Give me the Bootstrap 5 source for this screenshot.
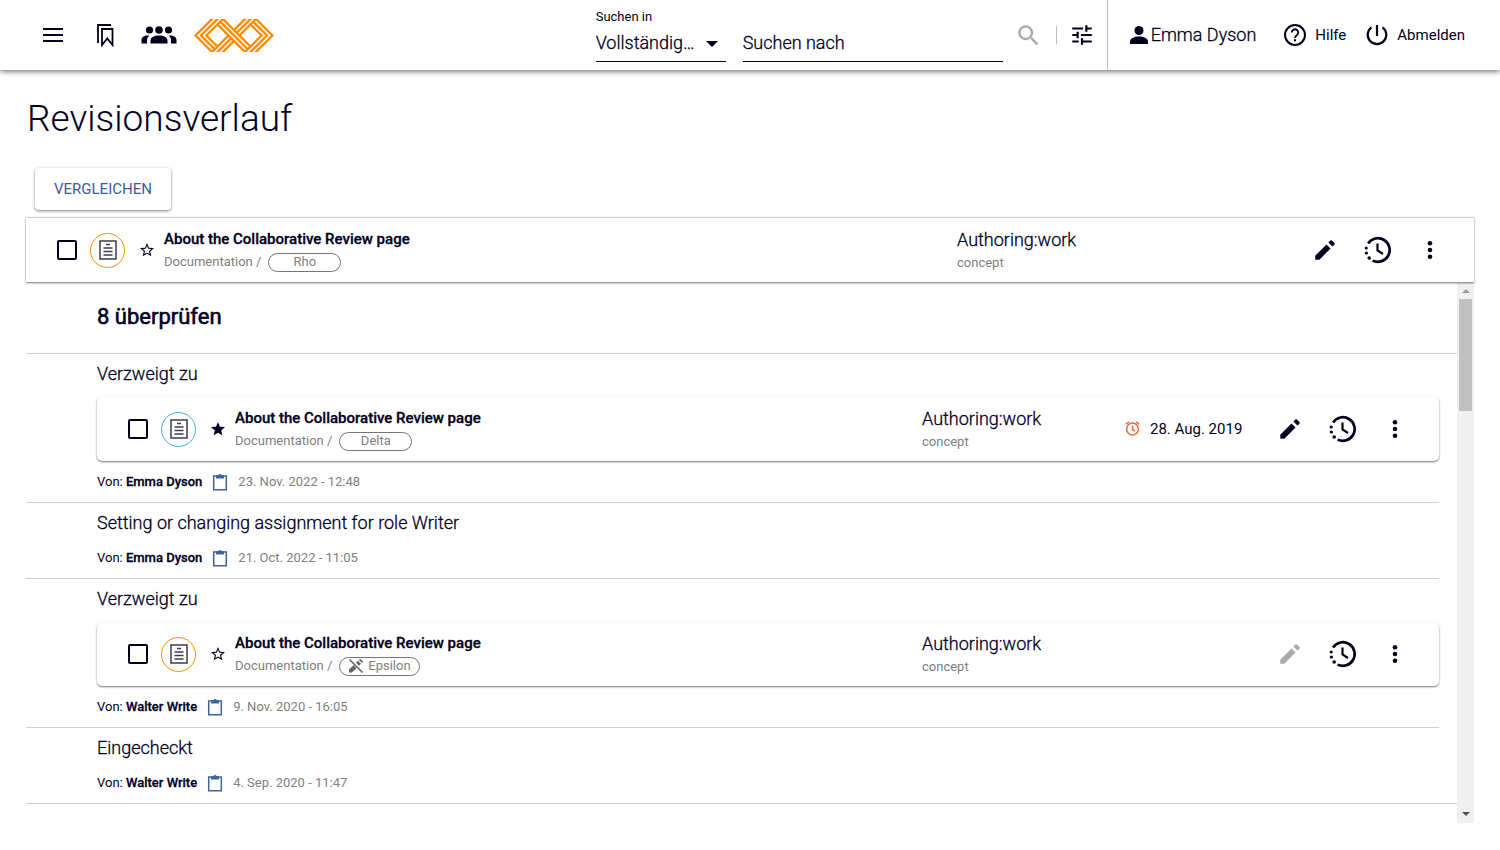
<!DOCTYPE html>
<html lang="de">
<head>
<meta charset="utf-8">
<meta name="viewport" content="width=device-width, initial-scale=1">
<title>Revisionsverlauf</title>
<link rel="stylesheet" href="https://cdn.jsdelivr.net/npm/bootstrap@5.3.0/dist/css/bootstrap.min.css">
<style>
:root{--ink:#00001e;--line:#d0d0d0}
body{font-family:Roboto,sans-serif;font-size:18px;line-height:24px;color:var(--ink);background:#fff}
svg{display:block;fill:currentColor;flex:none}
a{color:inherit;text-decoration:none}
.icon-btn{border:0;background:none;padding:0;color:inherit;display:block}
.icon-btn:disabled,.icon-btn.dim{color:#aaa}
.soft{font-weight:300;-webkit-text-stroke:.3px currentColor}
.topbar{height:70px;box-shadow:0 1px 6px rgba(0,0,0,.65);padding-left:41px}
.search-in{width:130px;margin-right:17px}
.search-in label{font-size:13px;line-height:16px;padding-top:9px}
.field{border:0;border-bottom:1px solid var(--ink);height:37px;background:none;color:var(--ink);padding:0 0 2px;border-radius:0;outline:0;width:100%}
select.field{appearance:none;padding:0 28px 0 0;text-overflow:ellipsis}
.caret{position:absolute;right:8px;bottom:15px;border:6px solid transparent;border-top-color:var(--ink);border-bottom:0;pointer-events:none}
.search-for{width:260px;padding-top:25px;margin-right:13px}
.field::placeholder{color:var(--ink);opacity:1}
.account{border-left:1px solid #bdbdbd;padding:0 35px 0 19px;margin-left:12px}
.account .t15{gap:9px}
.sep{width:1px;height:18px;background:#bdbdbd}
.t15{font-size:15px;line-height:20px}
.t13{font-size:13px;line-height:16px}
.page-title{font-size:37px;line-height:48px;font-weight:300;margin:25px 0 25px 1px}
.page-body{padding:0 26px}
.btn-compare{font-size:15px;line-height:20px;color:#3e5c94;background:#fff;border:0;border-radius:4px;padding:11px 19px;margin:0 0 7px 9px;box-shadow:0 1px 3px rgba(0,0,0,.5)}
.strong-ink{font-weight:500;-webkit-text-stroke:.3px currentColor}
.item{height:64px;background:#fff;box-shadow:0 1px 2px rgba(0,0,0,.55);padding:0 32px 0 31px}
.item.head-item{height:65px;border-top:1px solid var(--line);position:relative}
.item.sub-item{border-radius:5px}
.tick{appearance:none;width:20px;height:20px;border:2px solid var(--ink);border-radius:2px;margin:0 13px 0 0;flex:none}
.tick:checked{background:var(--ink)}
.kind{width:35px;height:35px;border:1px solid #ff8c00;border-radius:50%;color:#3c3c50;margin-right:15px;flex:none}
.kind.blue{border-color:#3fb1e5}
.star{margin-right:10px}
.muted{color:#808080}
.where{gap:7px;margin-top:4px}
.pill{border:1px solid #757575;border-radius:10px;height:19px;min-width:73px;padding:0 8px}
.state{width:203px}
.state .soft{line-height:22px;margin-bottom:4px}
.due{width:152px;gap:10px}
.acts{gap:26px;width:130px}
.list{height:calc(100vh - 309px);min-height:200px}
.list-pane{min-width:0}
.rev-head{font-size:22px;line-height:28px;font-weight:400;-webkit-text-stroke:.6px currentColor;padding:21px 0 22px 71px;border-bottom:1px solid var(--line);margin:0}
.rev{margin-right:18px;padding:8px 0 11px 71px;border-bottom:1px solid var(--line)}
.rev:last-child{margin-right:0}
.rev h3{font-size:18px;line-height:24px;margin:0 0 11px}
.by{height:18px;margin-top:14px}
.item + .by{margin-top:12px}
.bar{width:17px;background:#f0f0f0;padding:0 2px}
.bar .up,.bar .down{border:4px solid transparent;width:0;height:0;margin:0 auto}
.bar .up{border-top:0;border-bottom-color:#999;margin-top:7px;margin-bottom:6px}
.bar .down{border-bottom:0;border-top-color:#505050;margin-top:auto;margin-bottom:7px}
.thumb{height:112px;background:#c1c1c1}
</style>
</head>
<body>
<svg width="0" height="0" class="position-absolute" aria-hidden="true">
<symbol id="pen" viewBox="0 0 24 24"><path d="M3 17.250V21h3.750L17.100 10.650l-3.750-3.750L3 17.250zM20.710 7.040a1 1 0 0 0 0-1.410l-2.340-2.340a1 1 0 0 0-1.410 0l-1.830 1.830 3.750 3.750 1.830-1.830z"/></symbol>
<symbol id="hist" viewBox="0 0 28 28"><path d="M4.100 7.400A11.800 11.800 0 1 1 8.600 24.600" fill="none" stroke="currentColor" stroke-width="2.700"/><path d="M13.500 7.500v7l5.500 3.500" fill="none" stroke="currentColor" stroke-width="2.200"/><circle cx="2.200" cy="12" r="1.600"/><circle cx="2.400" cy="17" r="1.600"/><circle cx="5.200" cy="22" r="1.800"/></symbol>
<symbol id="dots" viewBox="0 0 24 24"><circle cx="12" cy="5.300" r="2.300"/><circle cx="12" cy="12" r="2.300"/><circle cx="12" cy="18.700" r="2.300"/></symbol>
<symbol id="doc" viewBox="0 0 18 20"><path d="M1 1h16v18H1z" fill="none" stroke="currentColor" stroke-width="1.500"/><path d="M7 4.500h4M4.500 8h9M4.500 11.500h9M4.500 15h9" stroke="currentColor" stroke-width="1.300"/></symbol>
<symbol id="star-o" viewBox="2 2 20 20"><path d="M22 9.240l-7.190-.62L12 2 9.190 8.630 2 9.240l5.460 4.730L5.820 21 12 17.270 18.180 21l-1.630-7.030L22 9.240zM12 15.400l-3.760 2.270 1-4.280-3.320-2.880 4.380-.38L12 6.100l1.710 4.040 4.380.38-3.320 2.880 1 4.280L12 15.400z"/></symbol>
<symbol id="star-f" viewBox="2 2 20 20"><path d="M12 17.270L18.180 21l-1.640-7.030L22 9.240l-7.190-.61L12 2 9.190 8.630 2 9.240l5.460 4.730L5.820 21z"/></symbol>
<symbol id="clip" viewBox="0 0 16 18"><path d="M1.700 3h12.600v13.700H1.700z" fill="none" stroke="#3e6496" stroke-width="1.500"/><path d="M4 2.200h2.300a1.800 1.800 0 0 1 3.400 0H12V5.500H4z" fill="#3e6496"/></symbol>
<symbol id="knot-half" viewBox="0 0 81 33"><path fill="none" stroke="#ff8c00" stroke-width="2.400" d="M30.400-1L12.900 16.500 24 27.600M25-1L7.500 16.500l13.800 13.800M19.600-1L2.100 16.500 18.600 33M17.600 34l17.500-17.500M23 34l14.800-14.800M28.400 34l12.100-12.100"/></symbol>
</svg>

<header class="topbar d-flex align-items-center position-relative">
  <button class="icon-btn" aria-label="Menü"><svg width="24" height="24" viewBox="0 0 24 24"><path d="M2 5h20v2H2zM2 11h20v2H2zM2 17h20v2H2z"/></svg></button>
  <button class="icon-btn ms-4 ps-1" aria-label="Lesezeichen"><svg width="24" height="24" viewBox="0 0 24 24"><path d="M5 20V2h13M9 6h10.500v16l-5.200-6.500L9 22z" fill="none" stroke="currentColor" stroke-width="1.800"/></svg></button>
  <button class="icon-btn ms-4" aria-label="Gruppen"><svg width="36" height="20" viewBox="0 0 36 20"><circle cx="8.500" cy="5" r="3.600"/><circle cx="18" cy="5" r="3.800"/><circle cx="27.500" cy="5" r="3.600"/><path d="M9.500 18.500v-3c0-3 3.500-5 8.500-5s8.500 2 8.500 5v3zM.5 18.500v-3.500c0-3 3-5 8-4.500-2 1.500-2.500 3-2.500 5v3zM35.500 18.500v-3.500c0-3-3-5-8-4.500 2 1.500 2.500 3 2.500 5v3z"/></svg></button>
  <a href="#" class="ms-3" aria-label="Startseite"><svg width="82" height="33" viewBox="0 0 81 33"><use href="#knot-half" width="81" height="33"/><use href="#knot-half" width="81" height="33" transform="rotate(180 40.500 16.500)"/><path fill="none" stroke="#ff8c00" stroke-width="2.400" d="M24 5.400L52.600 34M26.700 2.700l27.600 27.600M28.400-1L57 27.600"/></svg></a>
  <div class="search-in ms-auto align-self-start position-relative"><label for="scope" class="d-block">Suchen in</label><select id="scope" class="field soft"><option>Vollständiger Text</option></select><span class="caret"></span></div>
  <div class="search-for align-self-start"><input class="field soft" id="query" type="text" placeholder="Suchen nach" aria-label="Suchen nach"></div>
  <button class="icon-btn dim" aria-label="Suchen"><svg width="24" height="24" viewBox="1 1 21 21"><path d="M15.500 14h-.79l-.28-.27A6.500 6.500 0 1 0 13.730 14.430l.27.280v.79l5 4.990L20.490 19l-4.990-5zM9.500 14a4.500 4.500 0 1 1 0-9 4.500 4.500 0 0 1 0 9z"/></svg></button>
  <span class="sep ms-3"></span>
  <button class="icon-btn ms-2 ps-1" aria-label="Filter"><svg width="26" height="26" viewBox="0 0 24 24"><path d="M3 17v2h6v-2H3zM3 5v2h10V5H3zm10 16v-2h8v-2h-8v-2h-2v6h2zM7 9v2H3v2h4v2h2V9H7zm14 4v-2H11v2h10zm-6-4h2V7h4V5h-4V3h-2v6z"/></svg></button>
  <div class="account d-flex align-items-center align-self-stretch">
    <a href="#" class="d-flex align-items-center soft"><svg width="24" height="24" viewBox="0 0 24 24"><circle cx="12" cy="7.500" r="4.500"/><path d="M3 21v-2.500c0-3 4-5 9-5s9 2 9 5V21z"/></svg>Emma Dyson</a>
    <a href="#" class="d-flex align-items-center t15 ms-4 ps-1"><svg width="22" height="22" viewBox="0 0 22 22"><circle cx="11" cy="11" r="10" fill="none" stroke="currentColor" stroke-width="2"/><path d="M7.800 8.600a3.200 3.200 0 1 1 5 2.600c-1.200.9-1.800 1.400-1.800 2.800" fill="none" stroke="currentColor" stroke-width="1.900"/><path d="M10 15.200h2v2h-2z"/></svg>Hilfe</a>
    <a href="#" class="d-flex align-items-center t15 ms-3 ps-1"><svg width="22" height="22" viewBox="0 0 22 22"><path d="M11 1v11M5.500 3.300a9.300 9.300 0 1 0 11 0" fill="none" stroke="currentColor" stroke-width="2.200"/></svg>Abmelden</a>
  </div>
</header>

<main class="page-body">
  <h1 class="page-title">Revisionsverlauf</h1>
  <button class="btn btn-compare d-block">VERGLEICHEN</button>

  <article class="item head-item d-flex align-items-center">
    <input type="checkbox" class="tick" aria-label="Rho auswählen">
    <span class="kind d-flex align-items-center justify-content-center"><svg width="18" height="20"><use href="#doc"/></svg></span>
    <button class="icon-btn star" aria-label="Favorit"><svg width="14" height="14"><use href="#star-o"/></svg></button>
    <div class="flex-grow-1">
      <a href="#" class="d-block t15 strong-ink">About the Collaborative Review page</a>
      <div class="where d-flex align-items-center t13 muted"><span>Documentation /</span><span class="pill d-flex align-items-center justify-content-center">Rho</span></div>
    </div>
    <div class="state"><div class="soft">Authoring:work</div><div class="t13 muted">concept</div></div>
    <div class="due"></div>
    <div class="acts d-flex align-items-center">
      <button class="icon-btn" aria-label="Bearbeiten"><svg width="26" height="26"><use href="#pen"/></svg></button>
      <button class="icon-btn" aria-label="Verlauf"><svg width="28" height="28"><use href="#hist"/></svg></button>
      <button class="icon-btn" aria-label="Mehr"><svg width="24" height="24"><use href="#dots"/></svg></button>
    </div>
  </article>

  <div class="list d-flex">
    <div class="list-pane flex-grow-1 overflow-hidden">
      <h2 class="rev-head">8 überprüfen</h2>

      <section class="rev">
        <h3 class="soft">Verzweigt zu</h3>
        <article class="item sub-item d-flex align-items-center">
          <input type="checkbox" class="tick" aria-label="Delta auswählen">
          <span class="kind blue d-flex align-items-center justify-content-center"><svg width="18" height="20"><use href="#doc"/></svg></span>
          <button class="icon-btn star" aria-label="Favorit"><svg width="14" height="14"><use href="#star-f"/></svg></button>
          <div class="flex-grow-1">
            <a href="#" class="d-block t15 strong-ink">About the Collaborative Review page</a>
            <div class="where d-flex align-items-center t13 muted"><span>Documentation /</span><span class="pill d-flex align-items-center justify-content-center">Delta</span></div>
          </div>
          <div class="state"><div class="soft">Authoring:work</div><div class="t13 muted">concept</div></div>
          <div class="due t15 d-flex align-items-center"><svg width="15" height="16" viewBox="0 0 15 16"><g fill="none" stroke="#f4683c" stroke-width="1.500"><circle cx="7.500" cy="8" r="5.900"/><path d="M7.500 4.500v4l2.700 1.600M.8 3.300L3.900.7M14.200 3.300L11.100.7"/></g></svg>28. Aug. 2019</div>
          <div class="acts d-flex align-items-center">
            <button class="icon-btn" aria-label="Bearbeiten"><svg width="26" height="26"><use href="#pen"/></svg></button>
            <button class="icon-btn" aria-label="Verlauf"><svg width="28" height="28"><use href="#hist"/></svg></button>
            <button class="icon-btn" aria-label="Mehr"><svg width="24" height="24"><use href="#dots"/></svg></button>
          </div>
        </article>
        <div class="by t13 d-flex align-items-center"><span>Von: <span class="strong-ink">Emma Dyson</span></span><svg class="mx-2" width="20" height="18"><use href="#clip"/></svg><span class="muted">23. Nov. 2022 - 12:48</span></div>
      </section>

      <section class="rev">
        <h3 class="soft">Setting or changing assignment for role Writer</h3>
        <div class="by t13 d-flex align-items-center"><span>Von: <span class="strong-ink">Emma Dyson</span></span><svg class="mx-2" width="20" height="18"><use href="#clip"/></svg><span class="muted">21. Oct. 2022 - 11:05</span></div>
      </section>

      <section class="rev">
        <h3 class="soft">Verzweigt zu</h3>
        <article class="item sub-item d-flex align-items-center">
          <input type="checkbox" class="tick" aria-label="Epsilon auswählen">
          <span class="kind d-flex align-items-center justify-content-center"><svg width="18" height="20"><use href="#doc"/></svg></span>
          <button class="icon-btn star" aria-label="Favorit"><svg width="14" height="14"><use href="#star-o"/></svg></button>
          <div class="flex-grow-1">
            <a href="#" class="d-block t15 strong-ink">About the Collaborative Review page</a>
            <div class="where d-flex align-items-center t13 muted"><span>Documentation /</span><span class="pill d-flex align-items-center justify-content-center"><svg class="me-1" width="16" height="16" viewBox="0 0 16 16"><path d="M1 14.500v-3L10 2.800l3 3L4 14.500zM11 1.900L12.200.8l3 3-1.200 1.100z" fill="#666"/><path d="M1.500.5l14 14.500" stroke="#fff" stroke-width="3.400"/><path d="M1.500 1.500l13 13" stroke="#666" stroke-width="1.600"/></svg>Epsilon</span></div>
          </div>
          <div class="state"><div class="soft">Authoring:work</div><div class="t13 muted">concept</div></div>
          <div class="due"></div>
          <div class="acts d-flex align-items-center">
            <button class="icon-btn" aria-label="Bearbeiten" disabled><svg width="26" height="26"><use href="#pen"/></svg></button>
            <button class="icon-btn" aria-label="Verlauf"><svg width="28" height="28"><use href="#hist"/></svg></button>
            <button class="icon-btn" aria-label="Mehr"><svg width="24" height="24"><use href="#dots"/></svg></button>
          </div>
        </article>
        <div class="by t13 d-flex align-items-center"><span>Von: <span class="strong-ink">Walter Write</span></span><svg class="mx-2" width="20" height="18"><use href="#clip"/></svg><span class="muted">9. Nov. 2020 - 16:05</span></div>
      </section>

      <section class="rev">
        <h3 class="soft">Eingecheckt</h3>
        <div class="by t13 d-flex align-items-center"><span>Von: <span class="strong-ink">Walter Write</span></span><svg class="mx-2" width="20" height="18"><use href="#clip"/></svg><span class="muted">4. Sep. 2020 - 11:47</span></div>
      </section>
    </div>
    <div class="bar d-flex flex-column" aria-hidden="true"><span class="up"></span><span class="thumb"></span><span class="down"></span></div>
  </div>
</main>
<script src="https://cdn.jsdelivr.net/npm/bootstrap@5.3.0/dist/js/bootstrap.bundle.min.js"></script>
</body>
</html>
